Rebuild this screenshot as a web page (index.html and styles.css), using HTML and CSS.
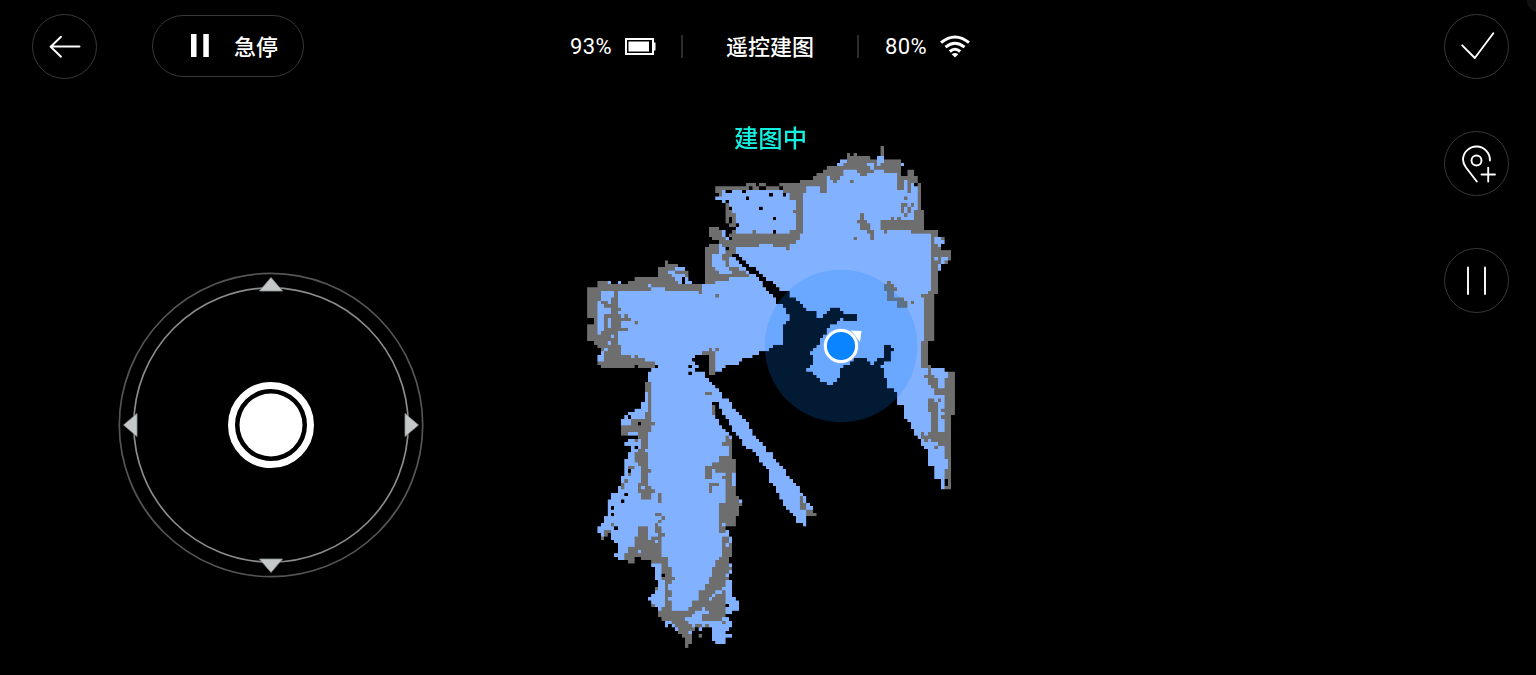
FILE: index.html
```html
<!DOCTYPE html>
<html lang="zh-CN">
<head>
<meta charset="utf-8">
<title>遥控建图</title>
<link rel="stylesheet" href="styles.css">
</head>
<body>
<div class="app">
  <div class="map">
    <canvas class="map-grid" id="grid"></canvas>
    <svg class="robot" viewBox="0 0 154 154">
      <circle cx="77" cy="77" r="76.3" fill="#0a84ff" fill-opacity=".2"/>
      <path d="M86.500 61.500 97.500 62 96 73Z" fill="#fff"/>
      <circle cx="77" cy="77" r="17.600" fill="#8fbcff"/>
      <circle cx="77" cy="77" r="15.600" fill="#0a84ff" stroke="#fff" stroke-width="3"/>
    </svg>
  </div>
  <header class="topbar">
    <div class="left-tools">
      <button class="round" aria-label="返回"><svg width="65" height="65" viewBox="0 0 65 65"><path d="M47.500 32.500H18.500M29 22.700 18.700 32.700 29 42.700"/></svg></button>
      <button class="stop"><svg width="18" height="23" viewBox="0 0 18 23"><path d="M0 0h5.500v23H0zM12.300 0h5.500v23h-5.500z"/></svg><span>急停</span></button>
    </div>
    <div class="status">
      <span class="num">93%</span>
      <svg class="battery" width="31" height="17" viewBox="0 0 31 17"><path d="M1 1h27v15H1z" fill="none" stroke="#fff" stroke-width="2"/><path d="M3.500 3.500h20.500v10h-20.500zM29 4.500h1.500v8H29z" fill="#fff"/></svg>
      <i class="divider"></i>
      <span class="title">遥控建图</span>
      <i class="divider"></i>
      <span class="num">80%</span>
      <svg class="wifi" width="30" height="23" viewBox="0 0 30 23"><path d="M1 7.700Q15-3.700 29 7.700M5.500 12.200Q15 4.200 24.500 12.200M9.800 16.500Q15 12 20.200 16.500" fill="none" stroke="#fff" stroke-width="3"/><path d="M11.700 19.200Q15 16.700 18.300 19.200L15 22.500Z" fill="#fff"/></svg>
    </div>
  </header>
  <p class="state">建图中</p>
  <svg class="joystick" width="306" height="306" viewBox="0 0 306 306">
    <circle cx="153" cy="153" r="151.700" stroke="#555" stroke-width="1.700"/>
    <circle cx="153" cy="153" r="137.200" stroke="#8c8c8c" stroke-width="1.700"/>
    <g fill="#c5c8c9" stroke="#8b9294" stroke-width=".8">
      <path d="M153 5.500 164.500 19h-23Z"/><path d="M153 300.500 164.500 287h-23Z"/>
      <path d="M5.500 153 19 141.500v23Z"/><path d="M300.500 153 287 141.500v23Z"/>
    </g>
    <circle cx="153" cy="153" r="39.500" stroke="#fff" stroke-width="7"/>
    <circle cx="153" cy="153" r="31.500" fill="#fff"/>
  </svg>
  <nav class="side">
    <button class="round" aria-label="完成"><svg width="65" height="65" viewBox="0 0 65 65"><path d="M18.200 31.300 30.800 44 49.300 19.200"/></svg></button>
    <button class="round" aria-label="添加点位"><svg width="65" height="65" viewBox="0 0 65 65"><path d="M32.800 50.500 22 36.500Q19 32.300 19 28.500A13.400 13.400 0 0 1 45.900 29.500M37.500 43.500H51M44.200 36.700V50.500"/><circle cx="32.500" cy="29.500" r="5"/></svg></button>
    <button class="round" aria-label="暂停"><svg width="65" height="65" viewBox="0 0 65 65"><path d="M24 19.500V46M41 19.500V46"/></svg></button>
  </nav>
  <i class="corner"></i>
</div>
<script src="map.js"></script>
</body>
</html>
```
FILE: styles.css
```css
body { margin: 0; background: #000; color: #fff; font-family: Roboto, "Noto Sans CJK SC", sans-serif; }
.app { position: relative; width: 1536px; height: 675px; overflow: hidden; background: #000;
  display: grid; grid-template-columns: 1fr 1fr 92px; grid-template-rows: 79px 194px 1fr; }
.map { position: absolute; inset: 0; }
.map-grid { position: absolute; left: 583.7px; top: 145.5px; }
.robot { position: absolute; left: 764px; top: 268.5px; width: 154px; height: 154px; }
.topbar { position: relative; grid-column: 1 / 3; grid-row: 1; display: flex; padding: 14px 0 0 32px; box-sizing: border-box; }
.left-tools { display: flex; align-items: center; gap: 55px; width: 538px; height: 65px; }
button { box-sizing: border-box; padding: 0; background: #000; color: #fff; font: inherit; border: 1px solid #383838; }
.round { width: 65px; height: 65px; border-radius: 50%; }
.round svg { display: block; margin: -1px; fill: none; stroke: #fff; stroke-width: 1.9; stroke-linecap: round; stroke-linejoin: round; }
.stop { width: 152px; height: 62px; margin-top: -1px; border-radius: 31px; display: flex; align-items: center; gap: 25px; padding-left: 38px; font-size: 22px; font-weight: 500; line-height: 30px; }
.stop svg { fill: #fff; margin-top: -2px; }
.stop span { padding-top: 3px; }
.status { display: flex; align-items: center; height: 65px; font-size: 22px; line-height: 30px; }
.num { width: 42px; letter-spacing: .35px; white-space: nowrap; }
.battery { margin-left: 13px; }
.divider { width: 2px; height: 23px; margin-left: 25px; background: #2b2b2b; }
.title { width: 88px; margin: 2px 17px 0 43px; font-weight: 500; }
.divider + .num { margin-left: 26px; }
.divider ~ .divider { margin-left: 26px; }
.wifi { margin-left: 13px; }
.state { position: relative; grid-column: 1 / 4; grid-row: 2; margin: 43px 0 0 5px; text-align: center; color: #14f0e0; font-size: 24.4px; font-weight: 500; line-height: 34px; height: 34px; }
.joystick { position: relative; grid-column: 1; grid-row: 3; margin: -1px 0 0 118px; fill: none; }
.side { position: relative; grid-column: 3; grid-row: 1 / 4; display: flex; flex-direction: column; gap: 52px; padding-top: 14px; }
.corner { position: absolute; right: -13px; top: -10px; width: 22px; height: 22px; border-radius: 50%; background: #111; }
```
FILE: map.js
```js
// Occupancy grid: tiles of outlines are sampled at cell centres.
const COLS = 111, ROWS = 150, CELL = 3.37, LEFT = 583.2, TOP = 145.05, UP = 10;
const FREE = '#82b1ff', WALL = '#6e6e6e', NONE = '#000';
const cells = Array.from({ length: ROWS }, () => Array(COLS).fill(NONE));

function poly(tile, color, text) {
  const p = text.trim().split(/\s+/).map(s => s.split(',').map(Number));
  for (let r = 0; r < ROWS; r++) for (let c = 0; c < COLS; c++) {
    const x = (LEFT + (c + .5) * CELL - tile[0]) * 3, y = (TOP + (r + .5) * CELL - tile[1]) * 3;
    let inside = false;
    for (let i = 0, j = p.length - 1; i < p.length; j = i++) {
      const [ax, ay] = p[i], [bx, by] = p[j];
      if ((ay > y) !== (by > y) && x < (bx - ax) * (y - ay) / (by - ay) + ax) inside = !inside;
    }
    if (inside) cells[r][c] = color;
  }
}
function dots(tile, color, text) {
  for (const s of text.trim().split(/\s+/)) {
    const [x, y] = s.split(',').map(Number);
    const c = Math.floor((tile[0] + x / 3 - LEFT) / CELL), r = Math.floor((tile[1] + y / 3 - TOP) / CELL);
    if (cells[r] && c >= 0 && c < COLS) cells[r][c] = color;
  }
}
const A = [700, 140], B = [580, 220], C = [760, 260], D = [590, 350], E = [590, 490], F = [690, 360];

// West room
poly(B, WALL, '50,182 90,182 110,192 150,182 165,170 235,170 235,142 255,138 255,120 265,120 270,132 295,132 295,142 315,142 325,180 345,190 375,190 375,80 400,70 600,100 600,372 570,385 545,395 520,405 485,415 470,430 440,435 425,450 395,460 385,460 385,405 355,405 335,415 345,430 355,450 385,480 205,480 205,450 220,440 60,440 50,425 50,400 70,395 60,380 40,370 40,360 22,360 22,315 35,310 35,290 22,285 22,205 50,200');
poly(B, FREE, '112,208 215,210 215,198 250,200 260,207 350,207 360,215 400,208 405,182 500,178 500,165 520,160 545,190 600,240 600,372 570,385 545,395 520,405 485,415 470,430 440,435 425,450 405,450 405,390 385,390 360,400 335,415 345,430 355,450 385,480 205,480 205,450 225,440 225,430 205,420 180,415 160,405 120,400 112,370 112,330 140,328 140,320 118,318 118,305 150,300 140,290 118,285 112,260');
poly(B, FREE, '60,212 100,208 100,225 90,230 90,255 80,250 70,240 60,232');
poly(B, FREE, '50,240 60,245 80,260 95,270 90,285 70,280 72,320 60,340 50,342 45,320 45,300 55,270');
poly(B, FREE, '80,290 92,285 92,320 80,320');
poly(B, FREE, '50,403 62,395 72,395 72,420 55,420');
poly(B, FREE, '270,142 315,142 320,180 345,190 300,190 270,165 265,155');
dots(B, FREE, '86,185 116,185 207,195 98,345 85,365 75,388 155,408');
dots(B, WALL, '100,236 73,245 102,256 112,266 118,285 136,286 126,295 136,295 146,295 166,306 112,376 167,407 177,417 275,145 285,155 295,155 305,155 288,206 358,215 400,215 410,225 390,386 410,386');
dots(B, NONE, '310,175 305,185 167,437 228,437');

// North room
poly(A, WALL, '45,138 135,138 135,128 165,128 165,138 175,128 195,128 195,138 238,138 238,127 298,127 298,118 338,118 338,107 350,107 350,97 370,97 370,87 390,77 408,77 410,67 420,57 440,52 440,37 450,37 450,50 460,50 460,37 470,37 470,47 510,47 515,60 525,60 530,47 540,40 540,17 550,17 550,47 560,57 600,60 610,68 600,75 600,110 610,112 620,105 620,88 635,88 640,98 650,108 650,128 660,128 660,208 670,208 670,268 710,268 710,285 730,290 735,305 722,310 722,325 750,330 750,355 735,370 720,370 720,390 712,390 712,455 0,455 0,430 15,430 15,320 35,310 45,300 25,280 25,260 45,260 60,270 85,285 100,275 75,240 75,185 60,180 55,168 60,155 45,155');
poly(A, FREE, '60,145 78,158 95,158 95,150 240,150 270,155 270,175 290,178 290,235 285,270 225,278 105,278 105,245 100,220 80,190 55,178 55,165 65,160');
poly(A, FREE, '308,168 318,140 358,138 358,158 380,158 380,108 400,125 425,110 430,90 465,90 480,105 500,95 525,90 545,88 545,98 590,98 592,145 605,150 605,135 612,115 620,110 622,158 632,158 632,128 650,128 650,205 640,210 640,235 600,235 590,240 575,228 565,235 540,240 540,265 550,268 580,265 630,270 640,277 692,277 692,455 0,455 0,430 40,430 50,420 80,420 90,410 150,410 140,395 115,385 90,380 85,355 100,350 105,320 170,318 200,300 230,315 260,320 265,310 297,298 297,280 308,275');
poly(A, FREE, '55,310 75,315 80,340 75,360 75,375 90,385 100,400 55,400 35,370 35,340 55,335');
poly(A, FREE, '410,67 420,57 440,57 440,67 420,77 410,77');
poly(A, FREE, '532,47 545,47 545,65 532,65');
poly(A, FREE, '703,292 722,290 730,305 715,315 703,305');
poly(A, FREE, '720,350 750,350 730,365 720,385 710,385 712,365 720,365');
dots(A, FREE, '505,72 515,82 605,70 50,170 65,275 65,285 76,290 706,353 535,75 510,75');
dots(A, WALL, '282,213 455,122 403,120 616,172 606,195 606,205 606,215 616,195 636,192 626,203 160,273 200,304 220,313 250,300 260,324 463,293 555,270 70,345 70,355 616,222 626,217 595,135 490,98');
poly(A, WALL, '478,218 490,218 490,235 508,245 508,265 520,268 520,297 508,297 508,280 490,270 480,260 480,248 468,248 468,238 478,235');
poly(A, WALL, '540,240 560,230 570,245 585,240 590,228 600,230 605,240 640,235 640,270 620,272 600,265 560,260 545,268');
dots(A, NONE, '150,142 180,142 190,142 242,142 78,153 88,153 132,153 212,162 252,162 140,172 80,183 90,203 181,203 221,233 90,233 90,243 110,253 100,263 221,273 80,283 90,293 50,303 80,323 645,132');
// Narrow shadow leading to the robot
poly(A, NONE, '95,338 110,338 115,350 145,370 180,400 215,425 245,450 215,455 190,440 180,420 150,395 125,372 105,360');

// East room
poly(C, FREE, '0,130 55,128 55,70 510,70 510,90 492,110 492,235 482,245 482,322 500,325 500,440 430,440 410,430 200,380 0,272');
poly(C, WALL, '510,0 532,0 532,95 520,105 520,235 500,245 500,322 482,322 482,240 492,235 492,110 505,90 510,80');
poly(C, WALL, '500,315 520,320 535,330 580,332 582,462 572,470 572,685 545,685 540,660 520,650 520,615 500,610 500,580 490,570 480,535 460,520 450,485 430,470 430,435 440,400 490,330');
poly(C, FREE, '410,315 500,325 500,350 512,375 520,385 530,400 545,400 552,430 550,510 525,500 515,460 525,450 500,410 500,450 515,455 515,500 495,530 515,540 550,540 550,590 560,600 565,610 555,630 555,685 545,685 540,660 520,650 520,615 500,610 500,580 490,570 480,535 460,520 450,485 430,470 430,435 410,430');
poly(C, FREE, '515,325 530,325 580,332 560,340 552,375 540,390 525,370 530,350 515,345');
poly(C, FREE, '543,465 552,465 552,512 535,512 530,475');
poly(C, WALL, '502,415 515,415 530,430 530,475 530,515 552,515 552,545 535,560 535,545 510,540 510,500 515,495 515,450 502,450');
poly(C, WALL, '500,345 515,345 515,355 530,360 530,380 515,380 500,370');
dots(C, WALL, '487,520 487,530 497,535 517,105 485,105 517,216 492,350 527,397 537,418 547,447 545,467 530,555 555,632');
poly(C, WALL, '380,60 390,60 390,72 408,80 408,92 400,95 400,112 425,115 438,122 438,138 415,138 410,125 390,122 380,115 380,92 370,80');
dots(C, WALL, '457,125');
dots(C, NONE, '497,575 557,660 557,670');
poly(C, NONE, '0,38 20,55 40,75 65,90 85,92 90,108 115,122 135,145 165,150 168,170 185,170 205,150 215,140 240,142 250,158 270,163 280,158 290,160 290,170 280,182 260,180 245,172 230,185 210,190 200,205 190,225 180,240 165,265 148,270 155,290 155,310 137,325 155,335 170,355 190,365 205,375 215,370 220,360 240,345 240,320 262,310 290,293 320,293 335,312 345,300 358,292 375,292 370,275 370,250 390,250 390,262 400,265 385,280 390,300 375,305 358,318 370,325 370,350 380,355 380,375 395,385 410,400 410,430 430,437 430,470 450,485 460,520 480,540 480,560 500,580 500,610 520,615 520,650 540,660 540,690 520,720 0,720 0,272 20,272 35,255 68,250 65,210 70,190 88,170 75,150 75,140 50,130 45,110 20,85 0,62');

// South corridor
poly(D, FREE, '175,65 205,40 330,40 345,75 395,125 395,145 415,145 425,175 455,195 480,235 480,295 465,290 460,270 445,260 440,245 420,220 395,195 380,160 370,150 375,190 385,205 400,235 425,255 425,320 435,340 430,370 435,400 435,435 445,440 455,462 435,475 435,490 48,490 52,470 65,450 72,430 82,410 92,400 92,380 103,370 105,325 115,310 125,290 105,280 120,265 145,270 140,255 92,252 92,215 105,195 130,180 155,155 165,130 175,90');
poly(D, WALL, '163,93 183,93 183,200 190,218 183,240 173,245 173,290 165,300 172,320 172,345 183,360 172,375 172,405 183,410 192,428 192,442 155,445 143,420 143,395 155,395 155,375 150,345 132,335 135,305 150,290 143,245 92,252 92,228 122,220 122,205 163,205 163,180 172,175 172,125 163,120');
poly(D, FREE, '150,405 162,400 162,420 150,420');
poly(D, WALL, '365,150 378,155 378,195 365,195');
poly(D, WALL, '345,122 365,122 365,135 345,135');
poly(D, WALL, '405,250 425,265 425,320 437,335 437,365 385,365 365,355 358,385 345,385 345,345 385,335 385,315 412,315 412,285 395,285 395,272 405,272');
poly(D, WALL, '345,405 358,395 385,395 385,408 365,412 365,435 355,435 355,420');
poly(D, WALL, '395,380 415,362 425,370 420,400 437,408 437,435 445,438 445,455 455,465 440,480 440,495 385,495 385,460 405,450 405,400');
poly(D, WALL, '204,435 214,435 214,460 204,460');
dots(D, WALL, '108,390 98,400 98,410 120,355 130,355 120,367 135,265 158,286');
dots(D, FREE, '430,400 170,175');
dots(D, NONE, '198,47 138,47 298,47 298,67 148,168 118,198 148,218 138,288 118,360 107,430 97,450 67,470 371,148 380,158');
poly(D, NONE, '305,22 325,12 350,12 355,60 345,70 330,60 312,62 312,50 325,48 315,35 305,32');
poly(E, FREE, '60,5 435,5 435,105 405,110 425,150 425,190 415,200 425,240 410,265 425,275 425,290 430,320 445,340 445,365 430,365 415,375 425,400 405,425 425,435 405,445 405,460 380,460 365,450 365,405 345,425 320,415 300,430 300,460 285,470 275,430 250,410 240,395 225,405 215,380 205,360 185,345 175,325 195,305 185,290 205,285 195,270 195,235 185,225 175,208 130,200 130,215 85,207 72,195 85,185 85,165 65,160 50,140 35,145 22,125 22,105 40,100 45,80 60,60 52,40');
poly(E, WALL, '385,40 405,35 405,-5 435,-5 435,15 445,20 435,35 455,38 455,45 435,50 435,105 405,108 405,125 385,125');
poly(E, WALL, '395,140 405,135 425,150 425,195 412,200 412,220 425,240 410,245 405,260 412,265 405,280 385,300 365,310 355,330 355,360 325,355 305,375 285,380 280,390 300,400 325,395 335,410 320,420 300,430 300,465 285,470 275,430 265,425 255,405 240,395 220,395 205,375 205,360 225,350 225,320 235,325 243,355 275,365 290,360 305,335 320,325 325,300 345,295 355,265 365,255 365,230 385,205 395,190');
poly(E, WALL, '355,330 385,310 405,300 405,350 400,375 390,388 350,388 335,390 320,380 350,365');
poly(E, WALL, '142,108 172,108 172,120 165,128 180,150 195,155 212,150 212,198 235,200 235,225 245,240 235,252 255,265 235,278 235,300 243,310 225,320 225,285 215,265 215,225 195,220 175,210 145,200 140,195 130,215 112,215 103,205 103,190 115,170 132,168 132,140 142,135');
poly(E, WALL, '150,-5 178,-5 190,20 180,25 155,22');
poly(E, WALL, '195,105 212,105 212,130 222,135 205,145 195,125');
dots(E, WALL, '208,15 208,25 208,35 198,72 208,72 218,82 208,92 198,102 188,142 198,142 208,142 68,102 78,112 45,122 45,132 35,142 55,122 198,292 190,342 360,5 238,315 349,404 400,395 326,434 289,465');
dots(E, FREE, '148,183 420,150 414,160 400,103 335,355 300,395 310,405 228,405 298,425');
dots(E, NONE, '107,12 97,32 67,51 67,72 77,112 57,132 67,152 57,142 410,344 410,375 317,425 318,415 337,415 348,420 135,203 217,250');

// Beam running south-east
poly(F, FREE, '20,25 40,40 65,65 95,95 97,112 118,118 125,140 155,165 160,185 185,205 190,225 215,245 225,270 245,275 250,295 290,330 290,345 310,365 325,385 345,405 348,425 365,440 365,455 348,470 345,495 320,490 315,470 300,455 285,440 265,400 240,360 235,330 210,310 200,285 185,265 165,260 150,235 130,210 115,200 100,165 85,150 75,125 60,110');
poly(F, WALL, '327,405 338,405 338,425 348,430 348,445 378,455 378,465 352,468 345,450 330,445');
dots(F, WALL, '49,98 59,98');
poly(F, NONE, '72,118 82,128 92,152 108,170 120,198 133,215 133,240 125,235 112,222 98,208 88,190 78,170 78,150 66,122');

const canvas = document.getElementById('grid');
canvas.width = COLS * UP;
canvas.height = ROWS * UP;
canvas.style.width = COLS * CELL + 'px';
canvas.style.height = ROWS * CELL + 'px';
const ctx = canvas.getContext('2d');
cells.forEach((row, r) => row.forEach((color, c) => {
  if (color === NONE) return;
  ctx.fillStyle = color;
  ctx.fillRect(c * UP, r * UP, UP, UP);
}));
```
